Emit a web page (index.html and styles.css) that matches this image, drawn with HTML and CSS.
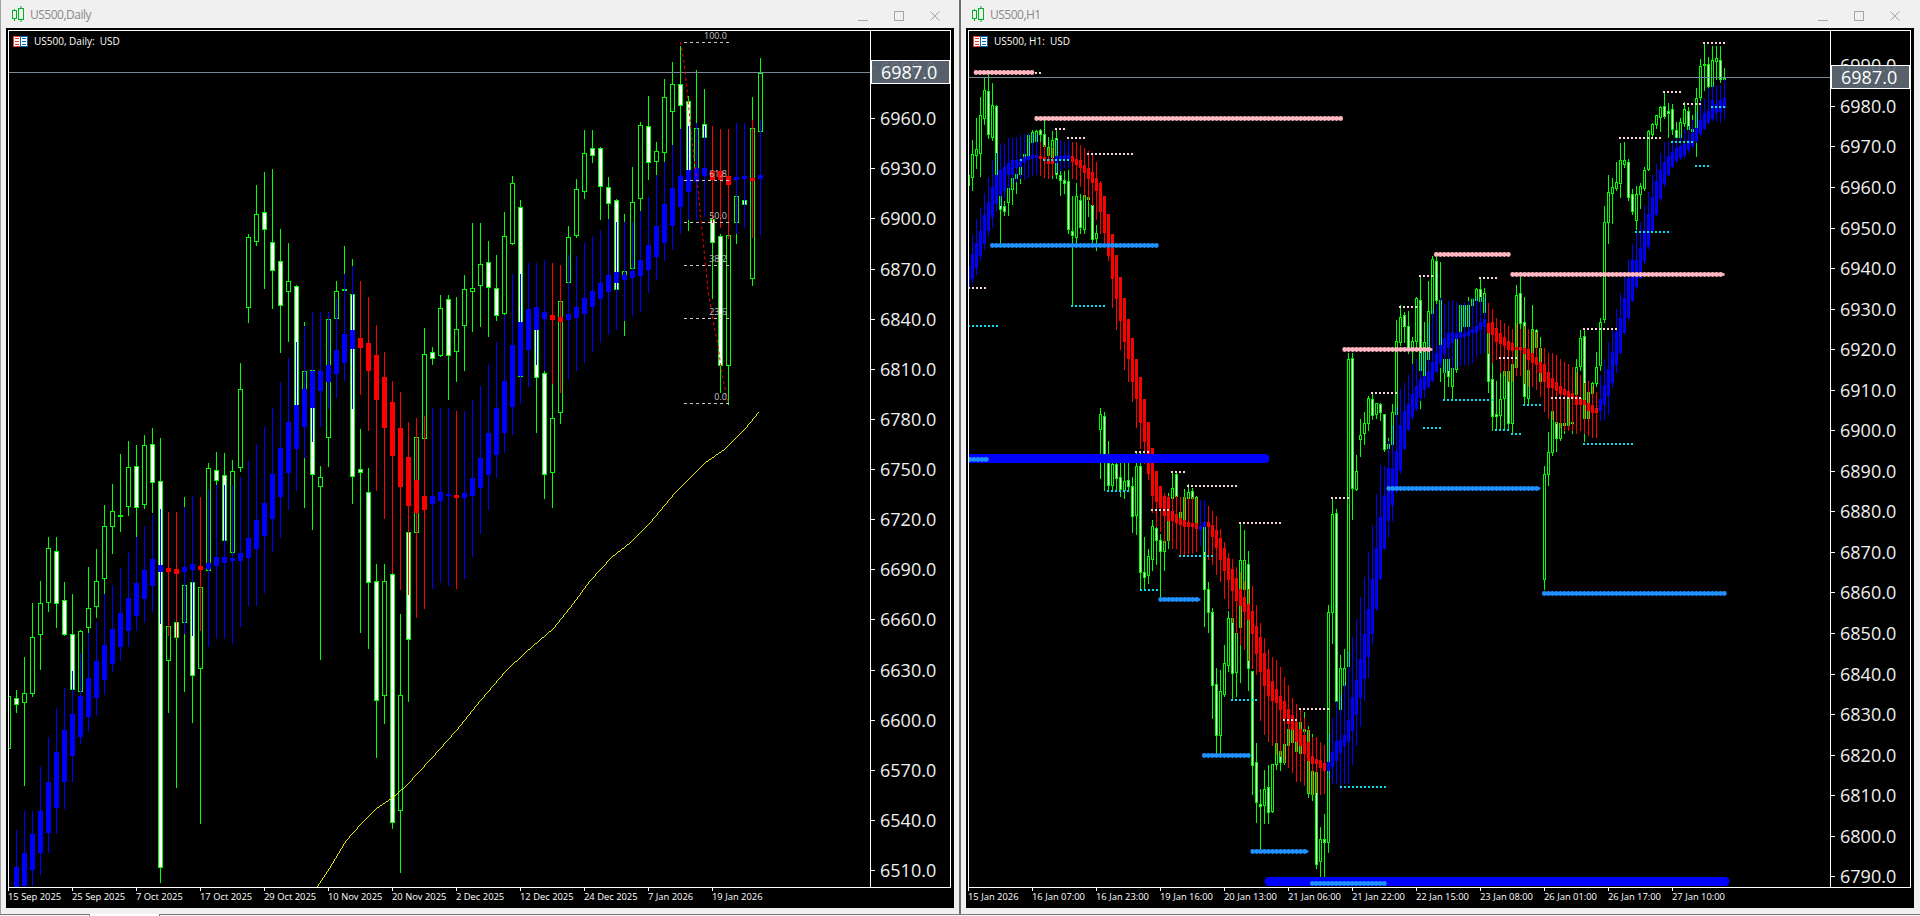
FILE: index.html
```html
<!DOCTYPE html>
<html lang="en">
<head>
<meta charset="utf-8">
<title>US500 charts</title>
<link rel="stylesheet" href="styles.css">
</head>
<body>
<main class="desktop">
  <section class="window">
    <header class="titlebar">
      <svg class="app-icon" viewBox="0 0 12 16"><path d="M2.5 3v2M2.5 13v2M9 0v2M9 14v2" /><rect x="0.5" y="4.5" width="4" height="8"/><rect x="6.5" y="2.5" width="5" height="11"/></svg>
      <span class="title">US500,Daily</span>
      <div class="controls">
        <span class="ctl"><svg viewBox="0 0 10 10"><path d="M0 9.5h10"/></svg></span>
        <span class="ctl"><svg viewBox="0 0 10 10"><rect x="0.5" y="0.5" width="9" height="9"/></svg></span>
        <span class="ctl"><svg viewBox="0 0 10 10"><path d="M0.5 0.5l9 9M9.5 0.5l-9 9"/></svg></span>
      </div>
    </header>
    <div class="chart">
      <div class="chart-main">
        <div class="plot">
          <svg class="canvas" id="daily" viewBox="9 31 861 856">
            <defs><clipPath id="daily-clip"><rect x="9" y="31" width="861" height="856"/></clipPath></defs>
            <g class="candles" clip-path="url(#daily-clip)"></g>
            <line class="bid" x1="9" x2="870" y1="72.5" y2="72.5"/>
            <polyline class="ma" points="317,887 331,866 346,841 361,824 376,809 392,798 406,786 431,759 456,731 481,700 506,671 526,652 553,629 570,608 590,581 612,557 630,543 650,523 675,493 705,463 725,449 745,429 759,412"/>
            <polyline class="trend" points="680.5,42 684,62 688,100 693,150 698,190 703,240 708,290 713,320 718,345 722,375 728.5,404"/>
            <g class="fib">
              <line x1="684" x2="729" y1="42.5" y2="42.5"/><text x="727" y="39">100.0</text>
              <line x1="684" x2="729" y1="180.5" y2="180.5"/><text x="727" y="177">61.8</text>
              <line x1="684" x2="729" y1="222.5" y2="222.5"/><text x="727" y="219">50.0</text>
              <line x1="684" x2="729" y1="265.5" y2="265.5"/><text x="727" y="262">38.2</text>
              <line x1="684" x2="729" y1="318.5" y2="318.5"/><text x="727" y="315">23.6</text>
              <line x1="684" x2="729" y1="403.5" y2="403.5"/><text x="727" y="400">0.0</text>
            </g>
          </svg>
          <div class="legend">
            <svg class="flag" viewBox="0 0 15 11"><rect x="0.5" y="0.5" width="7" height="10" class="flag-r"/><rect x="7.5" y="0.5" width="7" height="10" class="flag-b"/><path class="flag-r" d="M2 2.5h4M2 5.5h4M2 8.5h4"/><path class="flag-b" d="M9 2.5h4M9 5.5h4M9 8.5h4"/></svg>
            <span class="legend-text">US500, Daily:  USD</span>
          </div>
        </div>
        <div class="price-axis daily-axis">
          <span class="price">6990.0</span>
          <span class="price">6960.0</span>
          <span class="price">6930.0</span>
          <span class="price">6900.0</span>
          <span class="price">6870.0</span>
          <span class="price">6840.0</span>
          <span class="price">6810.0</span>
          <span class="price">6780.0</span>
          <span class="price">6750.0</span>
          <span class="price">6720.0</span>
          <span class="price">6690.0</span>
          <span class="price">6660.0</span>
          <span class="price">6630.0</span>
          <span class="price">6600.0</span>
          <span class="price">6570.0</span>
          <span class="price">6540.0</span>
          <span class="price">6510.0</span>
          <div class="bid-box">6987.0</div>
        </div>
      </div>
      <div class="time-axis">
        <span class="time">15 Sep 2025</span>
        <span class="time">25 Sep 2025</span>
        <span class="time">7 Oct 2025</span>
        <span class="time">17 Oct 2025</span>
        <span class="time">29 Oct 2025</span>
        <span class="time">10 Nov 2025</span>
        <span class="time">20 Nov 2025</span>
        <span class="time">2 Dec 2025</span>
        <span class="time">12 Dec 2025</span>
        <span class="time">24 Dec 2025</span>
        <span class="time">7 Jan 2026</span>
        <span class="time">19 Jan 2026</span>
      </div>
    </div>
  </section>

  <div class="divider"></div>

  <section class="window">
    <header class="titlebar">
      <svg class="app-icon" viewBox="0 0 12 16"><path d="M2.5 3v2M2.5 13v2M9 0v2M9 14v2" /><rect x="0.5" y="4.5" width="4" height="8"/><rect x="6.5" y="2.5" width="5" height="11"/></svg>
      <span class="title">US500,H1</span>
      <div class="controls">
        <span class="ctl"><svg viewBox="0 0 10 10"><path d="M0 9.5h10"/></svg></span>
        <span class="ctl"><svg viewBox="0 0 10 10"><rect x="0.5" y="0.5" width="9" height="9"/></svg></span>
        <span class="ctl"><svg viewBox="0 0 10 10"><path d="M0.5 0.5l9 9M9.5 0.5l-9 9"/></svg></span>
      </div>
    </header>
    <div class="chart">
      <div class="chart-main">
        <div class="plot">
          <svg class="canvas" id="hourly" viewBox="969 31 861 856">
            <defs><clipPath id="hourly-clip"><rect x="969" y="31" width="861" height="856"/></clipPath></defs>
            <g class="candles" clip-path="url(#hourly-clip)"></g>
            <line class="bid" x1="969" x2="1830" y1="77.5" y2="77.5"/>
            <g class="levels" clip-path="url(#hourly-clip)"></g>
          </svg>
          <div class="legend">
            <svg class="flag" viewBox="0 0 15 11"><rect x="0.5" y="0.5" width="7" height="10" class="flag-r"/><rect x="7.5" y="0.5" width="7" height="10" class="flag-b"/><path class="flag-r" d="M2 2.5h4M2 5.5h4M2 8.5h4"/><path class="flag-b" d="M9 2.5h4M9 5.5h4M9 8.5h4"/></svg>
            <span class="legend-text">US500, H1:  USD</span>
          </div>
        </div>
        <div class="price-axis hourly-axis">
          <span class="price">6990.0</span>
          <span class="price">6980.0</span>
          <span class="price">6970.0</span>
          <span class="price">6960.0</span>
          <span class="price">6950.0</span>
          <span class="price">6940.0</span>
          <span class="price">6930.0</span>
          <span class="price">6920.0</span>
          <span class="price">6910.0</span>
          <span class="price">6900.0</span>
          <span class="price">6890.0</span>
          <span class="price">6880.0</span>
          <span class="price">6870.0</span>
          <span class="price">6860.0</span>
          <span class="price">6850.0</span>
          <span class="price">6840.0</span>
          <span class="price">6830.0</span>
          <span class="price">6820.0</span>
          <span class="price">6810.0</span>
          <span class="price">6800.0</span>
          <span class="price">6790.0</span>
          <div class="bid-box">6987.0</div>
        </div>
      </div>
      <div class="time-axis">
        <span class="time">15 Jan 2026</span>
        <span class="time">16 Jan 07:00</span>
        <span class="time">16 Jan 23:00</span>
        <span class="time">19 Jan 16:00</span>
        <span class="time">20 Jan 13:00</span>
        <span class="time">21 Jan 06:00</span>
        <span class="time">21 Jan 22:00</span>
        <span class="time">22 Jan 15:00</span>
        <span class="time">23 Jan 08:00</span>
        <span class="time">26 Jan 01:00</span>
        <span class="time">26 Jan 17:00</span>
        <span class="time">27 Jan 10:00</span>
      </div>
    </div>
  </section>
</main>
<footer class="tabs"><span class="tab"></span></footer>
<script src="chart.js"></script>
</body>
</html>
```
FILE: styles.css
```css
* { box-sizing: border-box; }
html, body { margin: 0; height: 916px; overflow: hidden; background: #f0f0f0; }
body { font-family: "Open Sans", "Liberation Sans", sans-serif; display: flex; flex-direction: column; }

.desktop { display: flex; height: 914px; border-left: 1px solid #a0a0a0; }
.divider { width: 2px; background: #6e6e6e; }

.window { width: 958px; height: 914px; display: flex; flex-direction: column; background: #f0f0f0; }

.titlebar { height: 28px; display: flex; align-items: center; padding-left: 11px; padding-right: 6.5px; }
.app-icon { width: 12px; height: 16px; margin-right: 6px; fill: none; stroke: #00b120; stroke-width: 1; }
.title { font-size: 12px; letter-spacing: -0.5px; color: #8a8a8a; }
.controls { margin-left: auto; display: flex; }
.ctl { width: 36px; height: 28px; display: flex; align-items: center; justify-content: center; }
.ctl svg { width: 10px; height: 10px; margin-top: 3px; fill: none; stroke: #a6a6a6; stroke-width: 1; }

.chart { width: 948px; height: 880px; margin-left: 5px; padding: 2px 3px 0 2px; background: #000; display: flex; flex-direction: column; }
.chart-main { display: flex; height: 858px; border: 1px solid #fff; }

.plot { position: relative; width: 861px; height: 856px; }
.canvas { display: block; width: 861px; height: 856px; overflow: visible; }
.candles { shape-rendering: crispEdges; }
.bid { stroke: #778899; stroke-width: 1; shape-rendering: crispEdges; }
.ma { fill: none; stroke: #ffff00; stroke-width: 0.9; shape-rendering: crispEdges; }
.trend { fill: none; stroke: #ff0000; stroke-width: 1; stroke-dasharray: 3 3; }
.fib line { stroke: #c8c8c8; stroke-width: 1; stroke-dasharray: 3 3; shape-rendering: crispEdges; }
.fib text { font-size: 9px; fill: #c4c4c4; text-anchor: end; }

.legend { position: absolute; left: 4px; top: 5px; display: flex; align-items: center; gap: 6px; height: 11px; }
.flag { width: 15px; height: 11px; fill: #fff; stroke-width: 1; display: block; shape-rendering: crispEdges; }
.flag-r { stroke: #e8392c; }
.flag-b { stroke: #0b62ad; }
.legend-text { font-size: 10px; line-height: 11px; color: #fff; white-space: pre; }

.price-axis { position: relative; width: 80px; border-left: 1px solid #fff; display: flex; flex-direction: column; }
.daily-axis { padding-top: 12px; --row: 50.13px; }
.hourly-axis { padding-top: 14.1px; --row: 40.56px; }
.price { position: relative; flex: none; height: var(--row); display: flex; align-items: center; padding-left: 9px; font-size: 18px; color: #f0f0f0; }
.price::before { content: ""; position: absolute; left: 0; top: 50%; width: 4px; height: 1px; background: #fff; }
.bid-box { position: absolute; left: 0; width: 79px; height: 24px; display: flex; align-items: center; padding-left: 9px; font-size: 18px; font-weight: 500; color: #fff; background: rgba(93, 104, 116, 0.93); border: 1px solid #fff; }
.daily-axis .bid-box { top: 29px; }
.hourly-axis .bid-box { top: 34px; }

.time-axis { display: flex; height: 20px; }
.time { position: relative; flex: none; width: 64px; padding-top: 3px; font-size: 9.4px; line-height: 12px; color: #fff; white-space: nowrap; }
.time::before { content: ""; position: absolute; left: 0; top: 0; width: 1px; height: 3px; background: #fff; }

.tabs { height: 2px; border-top: 1px solid #7a7a7a; display: flex; background: #f0f0f0; }
.tab { width: 71px; margin-left: 89px; margin-top: -1px; background: #fff; border-left: 1px solid #7a7a7a; border-right: 1px solid #7a7a7a; }
```
FILE: chart.js
```js
/* Candle values are chart y coordinates: screen y = 30 + v / 1.825 */
var Y = function (v) { return Math.round(30 + v / 1.825); };
var H = 0, W = 1;

var dailyPrice = [
[1200,1215,1310,1320,H],[1205,1220,1230,1245,W],[1145,1210,1227,1378,H],[1045,1107,1210,1215,H],[1005,1045,1103,1167,H],[925,946,1043,1060,H],[925,950,1045,1090,W],[1008,1040,1102,1105,W],[1030,1102,1203,1205,W],[1095,1097,1207,1210,H],
[980,1055,1090,1098,H],[948,1005,1052,1072,H],[867,905,1000,1030,H],[828,878,905,955,H],[773,885,887,915,H],[750,798,868,885,H],[757,795,870,927,W],[740,757,865,872,H],[727,755,825,880,W],[745,823,1527,1555,W],
[1085,1088,1150,1245,H],[1080,1080,1107,1382,W],[853,1013,1080,1207,H],[1003,1008,1178,1262,W],[1015,1017,1165,1448,H],[790,800,985,990,H],[770,803,822,840,W],[772,812,930,932,W],[785,805,953,970,H],[607,655,797,805,H],
[372,378,505,532,H],[283,335,385,392,H],[260,333,363,470,W],[254,387,438,507,W],[363,421,502,587,W],[388,458,476,567,H],[465,467,690,715,W],[533,622,655,870,H],[515,620,810,910,W],[795,816,832,1148,H],
[525,527,743,795,H],[458,476,525,600,H],[395,472,474,475,H],[418,482,814,864,W],[728,801,807,1098,W],[800,843,1008,1128,W],[975,1005,1223,1327,W],[975,1005,1213,1265,H],[955,993,1445,1457,W],[1065,1213,1423,1537,H],
[820,916,1112,1225,W],[742,743,916,920,H],[543,591,745,748,H],[578,588,598,610,W],[483,507,593,595,H],[483,491,593,673,W],[488,546,586,640,H],[448,472,538,620,H],[353,470,476,550,H],[353,427,465,540,H],
[385,423,469,558,W],[410,470,520,530,W],[333,376,516,520,H],[267,279,388,390,H],[310,323,632,645,W],null,[510,545,633,733,W],[572,626,810,855,W],[640,708,807,870,H],[490,494,697,717,H],
[358,377,459,460,H],[272,290,375,378,H],[182,224,293,307,H],[182,216,229,240,W],[213,215,284,345,W],[268,286,315,347,W],[308,310,472,475,W],[335,440,450,556,H],[250,314,434,437,H],[168,174,306,330,H],
[120,175,240,272,W],[205,220,239,280,H],[90,123,222,240,H],[58,98,147,295,H],[30,98,136,190,W],[120,129,255,365,W],[73,178,255,345,H],[108,171,195,250,W],[340,345,386,490,W],[372,376,612,660,W],
[374,374,611,682,H],[300,303,350,388,H],[310,310,317,317,W],[122,178,453,466,H],[52,78,184,188,H]
];

var dailySmooth = [
null,[1460,1528,1570,1570,'b'],[1425,1502,1560,1570,'b'],[1425,1468,1532,1560,'b'],[1345,1425,1500,1540,'b'],[1290,1372,1464,1500,'b'],[1237,1318,1418,1465,'b'],[1200,1277,1370,1420,'b'],[1170,1248,1323,1370,'b'],[1137,1216,1288,1302,'b'],
[1100,1182,1252,1280,'b'],[1080,1152,1217,1250,'b'],[1030,1122,1184,1212,'b'],[1012,1093,1156,1170,'b'],[982,1064,1124,1150,'b'],[952,1037,1095,1125,'b'],[925,1009,1067,1095,'b'],[905,985,1037,1080,'b'],[885,966,1012,1060,'b'],[875,976,988,1082,'b'],
[880,981,987,1105,'r'],[880,983,991,1107,'r'],[870,980,988,1100,'b'],[850,975,984,1105,'b'],[852,978,984,1095,'r'],[838,972,982,1125,'b'],[830,962,977,1110,'b'],[830,962,970,1110,'b'],[830,964,967,1118,'b'],[815,954,967,1088,'b'],
[787,928,961,1050,'b'],[755,895,945,1050,'b'],[725,864,921,1025,'b'],[690,811,891,950,'b'],[642,762,851,925,'b'],[598,716,807,875,'b'],[570,684,762,840,'b'],[540,655,723,780,'b'],[515,623,688,750,'b'],[515,622,657,722,'b'],
[515,611,640,690,'b'],[490,584,626,670,'b'],[445,554,605,638,'b'],[430,548,581,690,'b'],[458,563,579,665,'r'],[487,571,620,730,'r'],[538,594,673,840,'r'],[587,634,725,890,'r'],[640,679,775,990,'r'],[660,726,833,1020,'r'],
[715,780,866,1030,'r'],[708,822,879,1072,'r'],[705,850,874,1055,'r'],[690,851,864,1018,'b'],[690,843,857,1008,'b'],[690,847,849,1012,'b'],[695,848,853,1018,'r'],[695,845,852,1000,'b'],[675,818,848,960,'b'],[650,782,834,918,'b'],
[610,735,810,875,'b'],[570,690,773,815,'b'],[520,640,734,770,'b'],[445,574,687,738,'b'],[445,532,630,680,'b'],[425,510,583,650,'b'],[425,506,545,610,'b'],[420,514,526,620,'b'],[425,520,528,645,'r'],[428,524,531,660,'r'],
[410,519,527,635,'b'],[412,506,523,620,'b'],[388,490,517,605,'b'],[376,476,503,585,'b'],[365,461,490,570,'b'],[345,448,477,555,'b'],[350,441,460,545,'b'],[350,448,454,530,'b'],[350,440,451,520,'b'],[330,420,447,512,'b'],
[305,392,436,478,'b'],[265,358,412,455,'b'],[240,318,387,420,'b'],[210,288,355,400,'b'],[180,266,321,370,'b'],[175,256,293,345,'b'],[170,252,275,345,'b'],[175,251,265,340,'b'],[175,258,272,350,'r'],[180,258,272,360,'r'],
[181,266,281,380,'r'],[170,269,272,370,'b'],[170,266,270,360,'b'],[165,270,274,377,'r'],[165,264,270,372,'b']
];

var hourlyPrice = [
[255,265,282,290,H],[200,226,268,292,H],[160,218,228,252,H],[122,155,225,267,H],[85,110,160,172,H],[82,112,190,197,W],[97,136,196,200,H],[137,138,265,310,W],[265,303,327,392,W],[312,322,330,337,W],
[270,288,314,338,H],[250,271,290,318,H],[235,262,270,297,H],[195,240,262,280,H],[225,226,232,262,H],[190,192,230,265,H],[183,187,205,225,H],[183,184,202,235,H],[180,183,190,232,W],[165,190,212,240,W],
[195,213,228,268,W],[185,200,232,270,H],[180,197,262,270,W],[255,264,273,302,W],[258,274,279,298,W],[255,275,364,370,W],[303,366,374,500,W],[280,303,378,395,H],[300,310,360,370,W],[295,302,364,370,H],
[300,305,308,340,W],[305,320,381,395,W],[355,370,380,402,H],[690,700,728,818,H],[698,705,775,840,W],[750,790,830,840,W],[790,792,830,838,H],[790,792,818,840,W],[790,815,837,850,W],[790,823,840,855,H],
[790,822,833,838,W],[815,833,887,917,W],[770,795,885,920,H],[770,795,990,1020,W],[925,990,998,1020,W],[948,960,995,1010,H],[895,905,965,985,H],[900,908,930,975,W],[920,931,950,1035,W],[925,932,950,985,H],
[845,890,930,945,H],[808,835,855,895,H],[805,810,850,880,W],[855,880,895,960,H],[838,853,905,955,H],[828,843,855,905,H],[835,841,855,880,W],[850,853,905,925,W],null,[905,906,1020,1088,W],
[1008,1020,1062,1098,W],[1055,1063,1195,1255,W],[1165,1194,1287,1320,W],[1168,1207,1287,1320,H],[1122,1156,1212,1215,H],[1060,1074,1158,1170,H],[1072,1073,1174,1222,W],[1085,1100,1172,1215,H],[897,967,1090,1190,H],[912,968,1020,1090,H],
[950,975,1165,1205,W],[1170,1170,1342,1395,W],[1302,1335,1408,1445,W],[1385,1412,1417,1498,W],[1350,1385,1415,1447,H],[1342,1382,1428,1447,W],[1340,1340,1425,1428,H],[1300,1302,1340,1348,H],[1300,1315,1335,1350,W],[1302,1303,1335,1340,H],
[1270,1275,1305,1315,H],[1240,1250,1300,1310,H],[1265,1275,1315,1320,H],[1240,1262,1320,1330,H],[1245,1275,1280,1330,W],[1270,1278,1393,1400,W],[1285,1352,1395,1405,H],[1355,1355,1522,1530,W],[1455,1476,1517,1550,H],[1430,1476,1481,1550,W],
[1050,1063,1482,1500,H],[855,884,1063,1118,H],[875,882,1225,1255,W],[1140,1165,1240,1270,H],[1130,1165,1195,1240,H],[590,600,1160,1170,H],[590,598,835,893,W],[775,805,838,840,H],[710,740,747,777,H],[698,718,735,755,H],
[668,672,717,730,H],[660,673,702,710,W],[680,681,701,708,H],[680,682,697,712,W],[700,700,765,768,W],[745,755,762,850,W],[682,697,755,760,H],[530,568,700,705,H],[502,524,570,575,H],[515,520,540,570,W],
[513,540,582,590,W],[560,568,582,607,H],[487,489,568,580,H],[448,493,620,690,W],[533,570,635,650,H],[458,513,600,610,H],[412,418,516,530,H],[415,422,492,505,W],[423,492,600,640,W],[560,600,625,675,H],
[575,600,632,650,W],[600,616,650,675,H],[550,560,618,625,H],[500,502,560,565,H],[500,502,540,560,H],[487,502,540,555,H],[490,491,502,540,H],[470,472,492,500,H],[450,473,494,515,W],[470,480,515,530,H],
[520,540,640,660,W],[605,637,705,730,W],[640,700,705,730,W],[610,673,703,728,H],[597,622,672,728,H],[600,623,717,730,W],[610,610,717,735,H],[465,484,615,620,H],[450,480,535,580,W],[488,532,668,685,W],
[600,620,672,680,H],[502,545,590,620,H],[545,547,578,590,W],[560,580,640,650,W],[795,810,1002,1020,H],[733,770,810,830,H],[695,695,770,775,H],[695,715,745,768,W],[695,718,745,748,H],[715,717,720,735,H],
[668,670,720,725,H],[715,716,718,735,H],[600,615,665,680,H],[548,562,613,620,H],[545,558,708,750,W],[660,660,708,712,H],[642,644,662,668,H],[587,615,645,650,H],[525,533,612,620,H],[322,350,528,532,H],
[265,295,350,388,H],[270,287,297,352,H],[240,278,288,292,H],[207,238,280,305,H],[205,238,245,250,H],[235,240,305,310,W],[290,300,330,335,W],[285,300,347,368,H],[280,284,300,325,H],[250,255,288,292,H],
[183,184,253,256,H],[170,172,190,195,H],[155,155,172,178,H],[138,140,158,185,H],[112,138,157,160,W],[133,147,152,195,W],[135,145,180,190,W],[168,183,195,200,W],[160,168,195,198,H],[132,145,170,175,H],
[140,148,180,185,W],[155,180,185,190,H],[105,125,178,230,H],[53,65,123,135,H],[25,62,64,110,H],[50,62,103,110,W],[30,55,103,108,H],[30,52,57,90,H],[30,55,90,95,W],[70,88,90,105,H]
];

var hourlySmooth = [
[410,430,470,480,'b'],[375,408,452,460,'b'],[345,388,432,445,'b'],[325,366,411,420,'b'],[298,338,388,400,'b'],[270,314,365,375,'b'],[238,286,340,360,'b'],[225,265,315,330,'b'],[208,255,300,320,'b'],[207,250,292,305,'b'],
[197,243,263,290,'b'],[197,238,262,280,'b'],[195,237,250,275,'b'],[192,235,248,270,'b'],[190,232,240,272,'b'],[188,230,235,268,'b'],[188,229,233,265,'b'],[190,228,232,262,'b'],[205,230,234,265,'r'],[210,231,237,268,'r'],
[215,236,243,270,'r'],[215,236,243,265,'r'],[200,230,240,260,'b'],[200,230,236,255,'b'],[205,228,234,250,'b'],[200,228,236,250,'b'],[205,230,239,270,'r'],[205,235,245,272,'r'],[210,238,250,285,'r'],[215,246,260,305,'r'],
[220,252,270,310,'r'],[225,260,278,320,'r'],[240,270,292,345,'r'],[275,280,330,370,'r'],[303,303,368,395,'r'],[336,336,410,420,'r'],[373,373,452,505,'r'],[410,411,490,545,'r'],[450,450,530,583,'r'],[490,490,568,618,'r'],
[528,528,598,640,'r'],[563,563,640,677,'r'],[600,600,672,725,'r'],[634,634,715,762,'r'],[673,673,750,790,'r'],[716,716,808,820,'r'],[762,762,848,880,'r'],[804,804,860,905,'r'],[832,832,870,915,'r'],[845,850,885,935,'r'],
[850,852,895,930,'r'],[852,878,895,945,'r'],[850,884,897,945,'r'],[852,890,902,958,'r'],[852,895,906,958,'r'],[852,898,905,955,'r'],[852,900,905,955,'r'],[855,900,908,950,'r'],[858,905,910,940,'b'],[857,897,905,950,'b'],
[868,898,906,965,'r'],[877,903,923,975,'r'],[887,912,943,992,'r'],[910,927,965,1005,'r'],[935,945,985,1037,'r'],[955,963,1002,1055,'r'],[965,983,1022,1080,'r'],[980,1001,1040,1100,'r'],[990,1020,1050,1120,'r'],[1005,1035,1060,1130,'r'],
[1020,1047,1075,1150,'r'],[1015,1060,1100,1165,'r'],[1050,1088,1137,1175,'r'],[1082,1107,1170,1260,'r'],[1110,1137,1195,1285,'r'],[1130,1166,1213,1298,'r'],[1145,1188,1223,1305,'r'],[1150,1203,1227,1322,'r'],[1162,1215,1240,1325,'r'],[1180,1225,1255,1335,'r'],
[1195,1240,1265,1345,'r'],[1220,1250,1275,1355,'r'],[1230,1262,1297,1370,'r'],[1240,1275,1305,1370,'r'],[1255,1287,1320,1378,'r'],[1275,1300,1333,1390,'r'],[1290,1325,1337,1395,'r'],[1290,1330,1338,1390,'r'],[1300,1333,1345,1395,'r'],[1305,1338,1350,1393,'r'],
[1285,1335,1350,1365,'b'],[1255,1317,1343,1375,'b'],[1225,1298,1332,1375,'b'],[1210,1295,1318,1385,'b'],[1190,1287,1305,1375,'b'],[1135,1260,1297,1375,'b'],[1108,1218,1278,1340,'b'],[1075,1187,1248,1305,'b'],[1035,1148,1218,1270,'b'],[998,1103,1183,1222,'b'],
[952,1057,1143,1180,'b'],[903,1002,1100,1118,'b'],[847,945,1055,1058,'b'],[793,888,1000,1002,'b'],[795,850,945,948,'b'],[750,800,895,925,'b'],[720,800,865,895,'b'],[690,768,840,845,'b'],[655,720,803,808,'b'],[645,695,762,765,'b'],
[630,682,728,730,'b'],[610,665,705,710,'b'],[600,650,690,693,'b'],[590,637,670,675,'b'],[580,632,655,670,'b'],[535,622,650,652,'b'],[510,605,638,640,'b'],[500,590,623,625,'b'],[490,575,607,615,'b'],[500,563,590,625,'b'],
[495,553,578,620,'b'],[492,552,570,618,'b'],[497,553,563,615,'b'],[500,552,560,612,'b'],[498,553,558,610,'b'],[495,550,557,610,'b'],[490,545,552,605,'b'],[488,540,552,595,'b'],[487,532,545,590,'b'],[487,528,540,588,'b'],
[498,534,552,590,'r'],[510,533,555,605,'r'],[525,543,567,600,'r'],[530,553,572,625,'r'],[535,560,575,630,'r'],[540,567,582,640,'r'],[545,572,584,640,'r'],[535,578,583,630,'r'],[545,578,583,630,'r'],[540,580,590,645,'r'],
[545,583,600,650,'r'],[548,589,605,650,'r'],[552,596,610,655,'r'],[578,605,625,668,'r'],[580,610,640,695,'r'],[590,625,651,708,'r'],[590,635,652,710,'r'],[593,643,657,718,'r'],[600,650,662,725,'r'],[605,655,665,730,'r'],
[610,658,670,730,'r'],[615,662,672,730,'r'],[625,668,683,735,'r'],[630,672,682,730,'r'],[645,675,683,735,'r'],[640,680,693,740,'r'],[650,685,698,742,'r'],[660,690,697,742,'r'],[630,673,693,712,'b'],[600,648,683,710,'b'],
[570,618,667,700,'b'],[545,588,643,650,'b'],[510,552,610,625,'b'],[480,525,587,590,'b'],[445,490,552,555,'b'],[418,452,523,530,'b'],[390,420,492,495,'b'],[365,420,468,470,'b'],[350,397,450,452,'b'],[320,365,420,425,'b'],
[295,335,395,398,'b'],[265,305,365,368,'b'],[245,275,335,338,'b'],[225,255,307,310,'b'],[205,240,280,285,'b'],[205,230,262,265,'b'],[200,222,248,250,'b'],[198,215,238,240,'b'],[190,212,232,236,'b'],[180,208,228,232,'b'],
[175,200,217,222,'b'],[165,188,210,215,'b'],[150,178,200,205,'b'],[130,165,188,192,'b'],[125,152,178,180,'b'],[105,147,168,170,'b'],[100,127,160,165,'b'],[100,135,150,165,'b'],[100,128,148,168,'b'],[90,124,140,160,'b']
];

/* [from, to, y]; first block is read from the left half of the H1 chart, second from the right half */
var A = function (x) { return 968 + x / 3; };
var B = function (x) { return 1340 + x / 3; };
var levels = {
  pink: [[A(18),A(200),76],[A(200),A(1125),161],[B(8),B(283),583],[B(283),B(512),408],[B(512),B(1160),446]],
  dodger: [[A(67),A(572),393],[A(572),A(703),1039],[A(703),A(848),1323],[A(848),A(1027),1499],[A(1027),B(140),1556],[B(140),B(607),836],[B(607),B(1160),1027],[A(0),A(68),783]],
  pale: [[A(0),A(55),469],[A(200),A(222),76],[A(262),A(295),179],[A(297),A(353),195],[A(358),A(497),225],[A(502),A(547),768],[A(549),A(605),875],[A(610),A(655),804],[A(658),A(810),830],[A(813),A(943),897],[A(945),A(990),1258],[A(993),A(1085),1237],[A(1090),A(1145),853],
         [B(94),B(172),660],[B(178),B(235),503],[B(238),B(282),448],[B(418),B(473),451],[B(478),B(533),597],[B(633),B(725),669],[B(730),B(835),543],[B(838),B(965),195],[B(970),B(1025),111],[B(1030),B(1085),133],[B(1090),B(1158),21]],
  cyan: [[A(0),A(90),539],[A(155),A(165),235],[A(225),A(305),236],[A(310),A(413),502],[A(418),A(490),840],[A(515),A(570),1020],[A(633),A(738),959],[A(790),A(870),1221],[B(0),B(137),1380],
         [B(250),B(305),725],[B(310),B(460),674],[B(465),B(510),729],[B(514),B(545),736],[B(550),B(605),683],[B(730),B(881),753],[B(886),B(990),367],[B(994),B(1060),203],[B(1066),B(1109),246],[B(1114),B(1157),139]]
};

var NS = 'http://www.w3.org/2000/svg';
function box(x, y, w, h) { return 'M' + x + ' ' + y + 'h' + w + 'v' + h + 'h' + (-w) + 'z'; }
function addPath(parent, d, fill) {
  var p = document.createElementNS(NS, 'path');
  p.setAttribute('d', d);
  p.setAttribute('fill', fill);
  parent.appendChild(p);
}
function drawCandles(id, first, step, half, price, smooth) {
  var g = document.querySelector('#' + id + ' .candles');
  var green = '', dark = '', white = '', blue = '', red = '';
  var size = 2 * half + 1;
  price.forEach(function (c, k) {
    if (!c) return;
    var x = first + step * k;
    var t = Y(c[1]), b = Math.max(Y(c[2]), t + 1);
    green += box(x, Y(c[0]), 1, Y(c[3]) - Y(c[0]) + 1);
    green += box(x - half, t, size, b - t + 1);
    if (b - t >= 2) {
      var inner = box(x - half + 1, t + 1, size - 2, b - t - 1);
      if (c[4] === W) white += inner; else dark += inner;
    }
  });
  smooth.forEach(function (c, k) {
    if (!c) return;
    var x = first + step * k;
    var t = Y(c[1]), b = Math.max(Y(c[2]), t + 1);
    var d = box(x, Y(c[0]), 1, Y(c[3]) - Y(c[0]) + 1) + box(x - half, t, size, b - t + 1);
    if (c[4] === 'r') red += d; else blue += d;
  });
  addPath(g, green, '#00ff00');
  addPath(g, dark, '#000000');
  addPath(g, white, '#ffffff');
  addPath(g, blue, '#0000ff');
  addPath(g, red, '#ff0000');
}
function addLine(g, x1, x2, y, stroke, width, extra) {
  var l = document.createElementNS(NS, 'line');
  l.setAttribute('x1', x1); l.setAttribute('x2', x2);
  l.setAttribute('y1', y); l.setAttribute('y2', y);
  l.setAttribute('stroke', stroke); l.setAttribute('stroke-width', width);
  if (extra === 'round') { l.setAttribute('stroke-linecap', 'round'); }
  if (extra === 'dots') { l.setAttribute('stroke-linecap', 'round'); l.setAttribute('stroke-dasharray', '0 4'); }
  if (extra === 'dash') { l.setAttribute('stroke-dasharray', '2 2'); l.setAttribute('shape-rendering', 'crispEdges'); }
  g.appendChild(l);
}
function fatDots(g, l, colour) {
  var y = Y(l[2]) + 0.5;
  addLine(g, l[0] + 2, l[1] - 2, y, colour, 2.5);
  addLine(g, l[0] + 2, l[1] - 2, y, colour, 4.8, 'dots');
}
function drawLevels() {
  var g = document.querySelector('#hourly .levels');
  addLine(g, 968, 1265, 458.5, '#0000ff', 9, 'round');
  addLine(g, 1269, 1725, 881.5, '#0000ff', 9, 'round');
  levels.pale.forEach(function (l) { addLine(g, l[0], l[1], Y(l[2]) + 0.5, '#f6d4da', 2, 'dash'); });
  levels.cyan.forEach(function (l) { addLine(g, l[0], l[1], Y(l[2]) + 0.5, '#00e0f0', 2, 'dash'); });
  levels.pink.forEach(function (l) { fatDots(g, l, '#ffb6c1'); });
  levels.dodger.forEach(function (l) { fatDots(g, l, '#1e90ff'); });
}
drawCandles('daily', 8, 8, 2, dailyPrice, dailySmooth);
drawCandles('hourly', 968, 4, 1, hourlyPrice, hourlySmooth);
drawLevels();
```
